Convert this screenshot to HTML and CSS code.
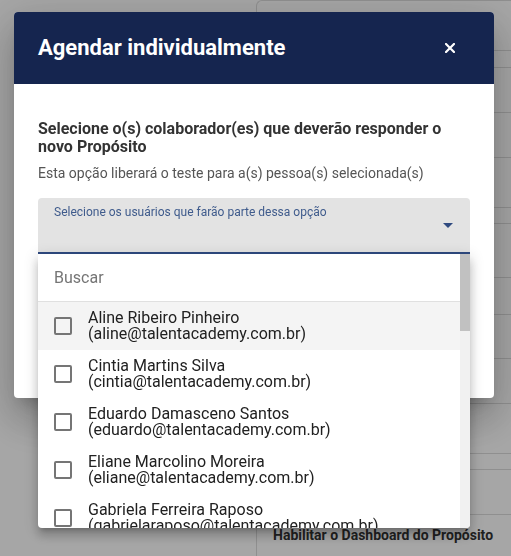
FILE: index.html
```html
<!DOCTYPE html>
<html lang="pt-BR">
<head>
<meta charset="utf-8">
<title>Agendar individualmente</title>
<link rel="stylesheet" href="styles.css">
</head>
<body>
<div class="page">
  <div class="page-side"></div>
  <div class="page-card">
    <div class="row h49"></div>
    <div class="row h16"></div>
    <div class="row h44"></div>
    <div class="row h44"></div>
    <div class="row h49"></div>
    <div class="row h15"></div>
    <div class="row h53"></div>
    <div class="row h36"></div>
    <div class="row h43"></div>
    <div class="row h44"></div>
    <div class="row h49"></div>
    <div class="row h15"></div>
    <div class="row h44"></div>
    <div class="row last">Habilitar o Dashboard do Propósito</div>
  </div>
</div>
<div class="scrim"></div>
<div class="dialog">
  <div class="dialog-header">
    <h1 class="dialog-title">Agendar individualmente</h1>
    <button class="close" aria-label="Fechar">
      <svg width="10" height="10" viewBox="0 0 10 10"><path d="M1 1 L9 9 M9 1 L1 9" stroke="#fff" stroke-width="2.2" stroke-linecap="square"/></svg>
    </button>
  </div>
  <div class="dialog-body">
    <h2 class="question">Selecione o(s) colaborador(es) que deverão responder o novo Propósito</h2>
    <p class="hint">Esta opção liberará o teste para a(s) pessoa(s) selecionada(s)</p>
    <div class="field">
      <span class="field-label">Selecione os usuários que farão parte dessa opção</span>
      <svg class="arrow" width="10" height="5" viewBox="0 0 10 5"><path d="M0 0 L10 0 L5 5 Z" fill="#2f4a80"/></svg>
    </div>
  </div>
</div>
<div class="menu">
  <div class="menu-content">
    <div class="search">Buscar</div>
    <ul class="options">
      <li class="option active"><span class="box"></span><span class="label">Aline Ribeiro Pinheiro<br>(aline@talentacademy.com.br)</span></li>
      <li class="option"><span class="box"></span><span class="label">Cintia Martins Silva<br>(cintia@talentacademy.com.br)</span></li>
      <li class="option"><span class="box"></span><span class="label">Eduardo Damasceno Santos<br>(eduardo@talentacademy.com.br)</span></li>
      <li class="option"><span class="box"></span><span class="label">Eliane Marcolino Moreira<br>(eliane@talentacademy.com.br)</span></li>
      <li class="option"><span class="box"></span><span class="label">Gabriela Ferreira Raposo<br>(gabrielaraposo@talentacademy.com.br)</span></li>
    </ul>
  </div>
  <div class="scrollbar"><div class="thumb"></div></div>
</div>
</body>
</html>
```

FILE: styles.css
```css
* { box-sizing: border-box; }
html, body {
  margin: 0;
  padding: 0;
  width: 511px;
  height: 556px;
  overflow: hidden;
  font-family: Roboto, "Liberation Sans", Arial, sans-serif;
  background: #ffffff;
}

/* underlying page */
.page {
  display: grid;
  grid-template-columns: 256px 1fr;
  height: 556px;
}
.page-card {
  border-left: 1px solid #dcdcdc;
  border-top: 1px solid #dcdcdc;
  border-top-left-radius: 6px;
  display: flex;
  flex-direction: column;
}
.row { border-bottom: 1px solid #dcdcdc; flex: none; }
.h49 { height: 50px; }
.h16 { height: 17px; }
.h44 { height: 45px; }
.h15 { height: 16px; }
.h53 { height: 54px; }
.h36 { height: 37px; }
.h43 { height: 44px; }
.row.last {
  border-bottom: none;
  padding: 10px 0 0 16px;
  font-size: 14px;
  line-height: 20px;
  font-weight: 700;
  color: #333;
}

.scrim {
  position: fixed;
  inset: 0;
  background: rgba(0, 0, 0, 0.35);
}

/* dialog */
.dialog {
  position: fixed;
  left: 14px;
  top: 12px;
  width: 480px;
  height: 386px;
  background: #fff;
  border-radius: 4px;
  overflow: hidden;
  box-shadow: 0 11px 15px -7px rgba(0,0,0,.2), 0 24px 38px 3px rgba(0,0,0,.14), 0 9px 46px 8px rgba(0,0,0,.12);
}
.dialog-header {
  height: 72px;
  background: #15254f;
  display: flex;
  align-items: center;
  justify-content: space-between;
  padding: 0 39px 0 24px;
}
.dialog-title {
  margin: 0;
  color: #fff;
  font-size: 22px;
  font-weight: 700;
  line-height: 26px;
}
.close {
  border: 0;
  background: none;
  padding: 0;
  width: 10px;
  height: 10px;
  display: flex;
}
.dialog-body {
  padding: 36px 24px 0 24px;
}
.question {
  margin: 0;
  font-size: 16px;
  line-height: 18px;
  font-weight: 700;
  color: #333;
}
.hint {
  margin: 7px 0 0;
  font-size: 14px;
  line-height: 20px;
  color: #555;
}
.field {
  margin-top: 15px;
  height: 56px;
  background: #e3e3e3;
  border-radius: 4px 4px 0 0;
  border-bottom: 2px solid #2f4a80;
  padding: 7px 16px 0 16px;
  display: flex;
  align-items: flex-start;
  justify-content: space-between;
}
.field-label {
  font-size: 12px;
  line-height: 14px;
  color: #3f5b8c;
}
.arrow { margin-top: 18px; margin-right: 1px; }

/* dropdown panel */
.menu {
  position: fixed;
  left: 38px;
  top: 254px;
  width: 432px;
  height: 274px;
  background: #fff;
  overflow: hidden;
  display: flex;
  border-radius: 0 0 4px 4px;
  box-shadow: 0 5px 5px -3px rgba(0,0,0,.2), 0 8px 10px 1px rgba(0,0,0,.14), 0 3px 14px 2px rgba(0,0,0,.12);
}
.menu-content {
  flex: 1;
  min-width: 0;
  overflow: hidden;
}
.scrollbar {
  flex: none;
  width: 10px;
  background: #f1f1f1;
}
.thumb {
  height: 77px;
  background: #c1c1c1;
}
.search {
  height: 48px;
  border-bottom: 1px solid #e0e0e0;
  padding: 0 16px;
  display: flex;
  align-items: center;
  font-size: 16px;
  color: #757575;
}
.options { list-style: none; margin: 0; padding: 0; }
.option {
  height: 48px;
  display: flex;
  align-items: center;
  padding: 0 16px;
  gap: 16px;
  color: #212121;
}
.option.active { background: #f4f4f4; }
.box {
  flex: none;
  width: 18px;
  height: 18px;
  border: 2px solid #757575;
  border-radius: 2px;
}
.label {
  font-size: 16px;
  line-height: 16px;
  white-space: nowrap;
}
```
